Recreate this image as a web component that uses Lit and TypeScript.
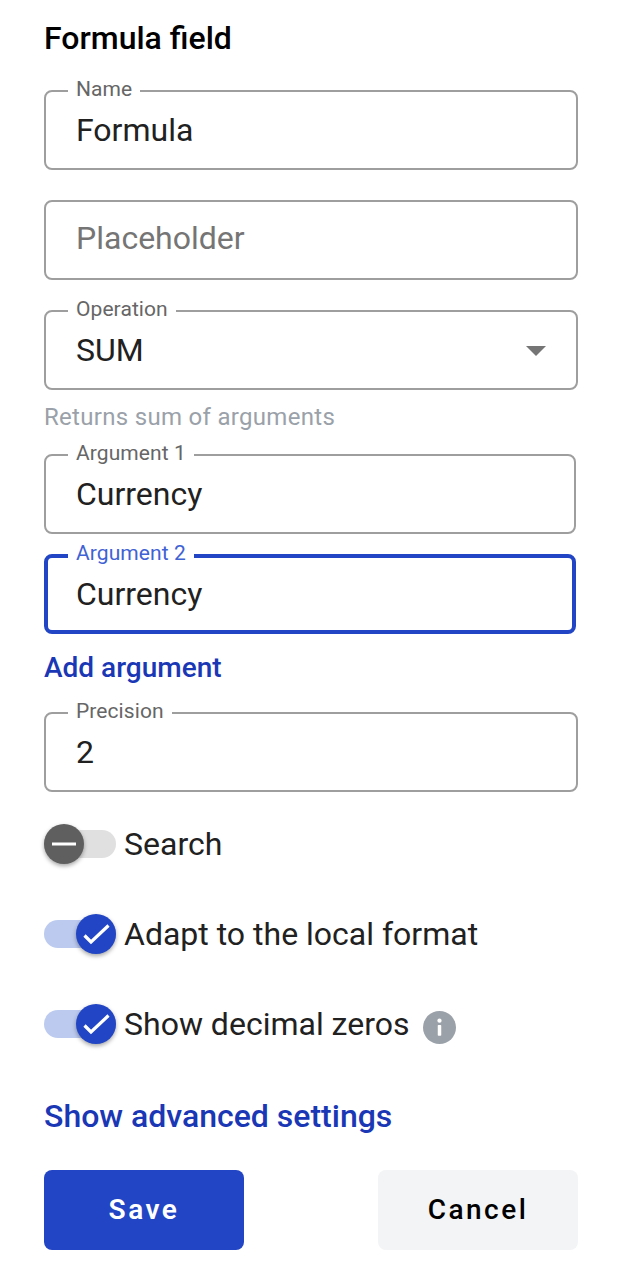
import { LitElement, html, css } from "lit";
import { customElement } from "lit/decorators.js";

@customElement("app-root")
export class AppRoot extends LitElement {
  static styles = css`
    :host { display: block; width: 620px; height: 1274px; box-sizing: border-box; padding: 20px 42px 0 44px; font-family: Roboto, sans-serif; color: #212121; background: #fff; }
    h1 { margin: 0; font-size: 32px; line-height: 36px; font-weight: 500; color: #000; height: 36px; }
    .field { position: relative; box-sizing: border-box; width: 534px; height: 80px; border: 2px solid #9e9e9e; border-radius: 8px; padding: 0 30px; display: flex; align-items: center; font-size: 32px; }
    .wide { width: 532px; }
    .f1 { margin-top: 34px; }
    .legend { position: absolute; top: -16px; left: 22px; padding: 0 8px; background: #fff; font-size: 21px; line-height: 26px; color: #666; letter-spacing: .08px; }
    .placeholder { color: #757575; position: relative; top: -2px; }
    .mt { margin-top: 30px; }
    .help { font-size: 24px; line-height: 26px; color: #9aa1a9; margin-top: 14px; height: 26px; letter-spacing: .3px; }
    .arg1 { margin-top: 24px; }
    .focus { border: 4px solid #2145c4; padding: 0 28px; margin-top: 20px; }
    .focus .legend { color: #3f62d4; top: -18px; left: 20px; }
    .link { line-height: 34px; font-weight: 500; color: #1a37b5; }
    .add { font-size: 28px; margin-top: 17px; }
    .adv { font-size: 32px; margin-top: 53px; line-height: 38px; }
    .prec { margin-top: 27px; }
    .row { display: flex; align-items: center; font-size: 32px; height: 40px; margin-top: 50px; }
    .first { margin-top: 32px; }
    .switch { position: relative; width: 72px; height: 28px; border-radius: 14px; margin-right: 8px; flex: none; }
    .switch.off { background: #e0e0e0; }
    .switch.on { background: #bccaef; }
    .knob { position: absolute; top: -6px; width: 40px; height: 40px; border-radius: 50%; display: block; box-shadow: 0 2px 4px rgba(0,0,0,.35); }
    .off .knob { left: 0; background: #5f5f5f; }
    .on .knob { right: 0; background: #2145c4; }
    .info { margin: 6px 0 0 14px; }
    .buttons { display: flex; justify-content: space-between; width: 534px; margin-top: 35px; }
    .btn { box-sizing: border-box; width: 200px; height: 80px; padding-bottom: 2px; border-radius: 8px; display: flex; align-items: center; justify-content: center; font-size: 28px; font-weight: 500; letter-spacing: 2.5px; }
    .save { background: #2145c4; color: #fff; font-weight: 600; }
    .cancel { background: #f3f4f6; color: #000; }
    .arrow { position: absolute; right: 30px; top: 34px; }
  `;

  private check() {
    return html`<svg class="knob" width="40" height="40" viewBox="0 0 40 40"><path d="M8.5 21.5l6.5 6.5L32.5 11.5" fill="none" stroke="#fff" stroke-width="3.2"/></svg>`;
  }

  render() {
    return html`
      <h1>Formula field</h1>
      <div class="field f1"><span class="legend">Name</span>Formula</div>
      <div class="field mt"><span class="placeholder">Placeholder</span></div>
      <div class="field mt"><span class="legend">Operation</span>SUM
        <svg class="arrow" width="20" height="10" viewBox="0 0 20 10"><path d="M0 0h20L10 10z" fill="#757575"/></svg>
      </div>
      <div class="help">Returns sum of arguments</div>
      <div class="field wide arg1"><span class="legend">Argument 1</span>Currency</div>
      <div class="field wide focus"><span class="legend">Argument 2</span>Currency</div>
      <div class="link add">Add argument</div>
      <div class="field prec"><span class="legend">Precision</span>2</div>
      <div class="row first">
        <div class="switch off"><svg class="knob" width="40" height="40" viewBox="0 0 40 40"><path d="M8 20h24" stroke="#fff" stroke-width="3"/></svg></div>Search
      </div>
      <div class="row">
        <div class="switch on">${this.check()}</div>Adapt to the local format
      </div>
      <div class="row">
        <div class="switch on">${this.check()}</div>Show decimal zeros
        <svg class="info" width="33" height="33" viewBox="0 0 34 34"><circle cx="17" cy="17" r="17" fill="#9aa1a9"/><circle cx="17" cy="10" r="2.2" fill="#fff"/><rect x="15.2" y="14.5" width="3.6" height="11" rx=".8" fill="#fff"/></svg>
      </div>
      <div class="link adv">Show advanced settings</div>
      <div class="buttons"><div class="btn save">Save</div><div class="btn cancel">Cancel</div></div>
    `;
  }
}
